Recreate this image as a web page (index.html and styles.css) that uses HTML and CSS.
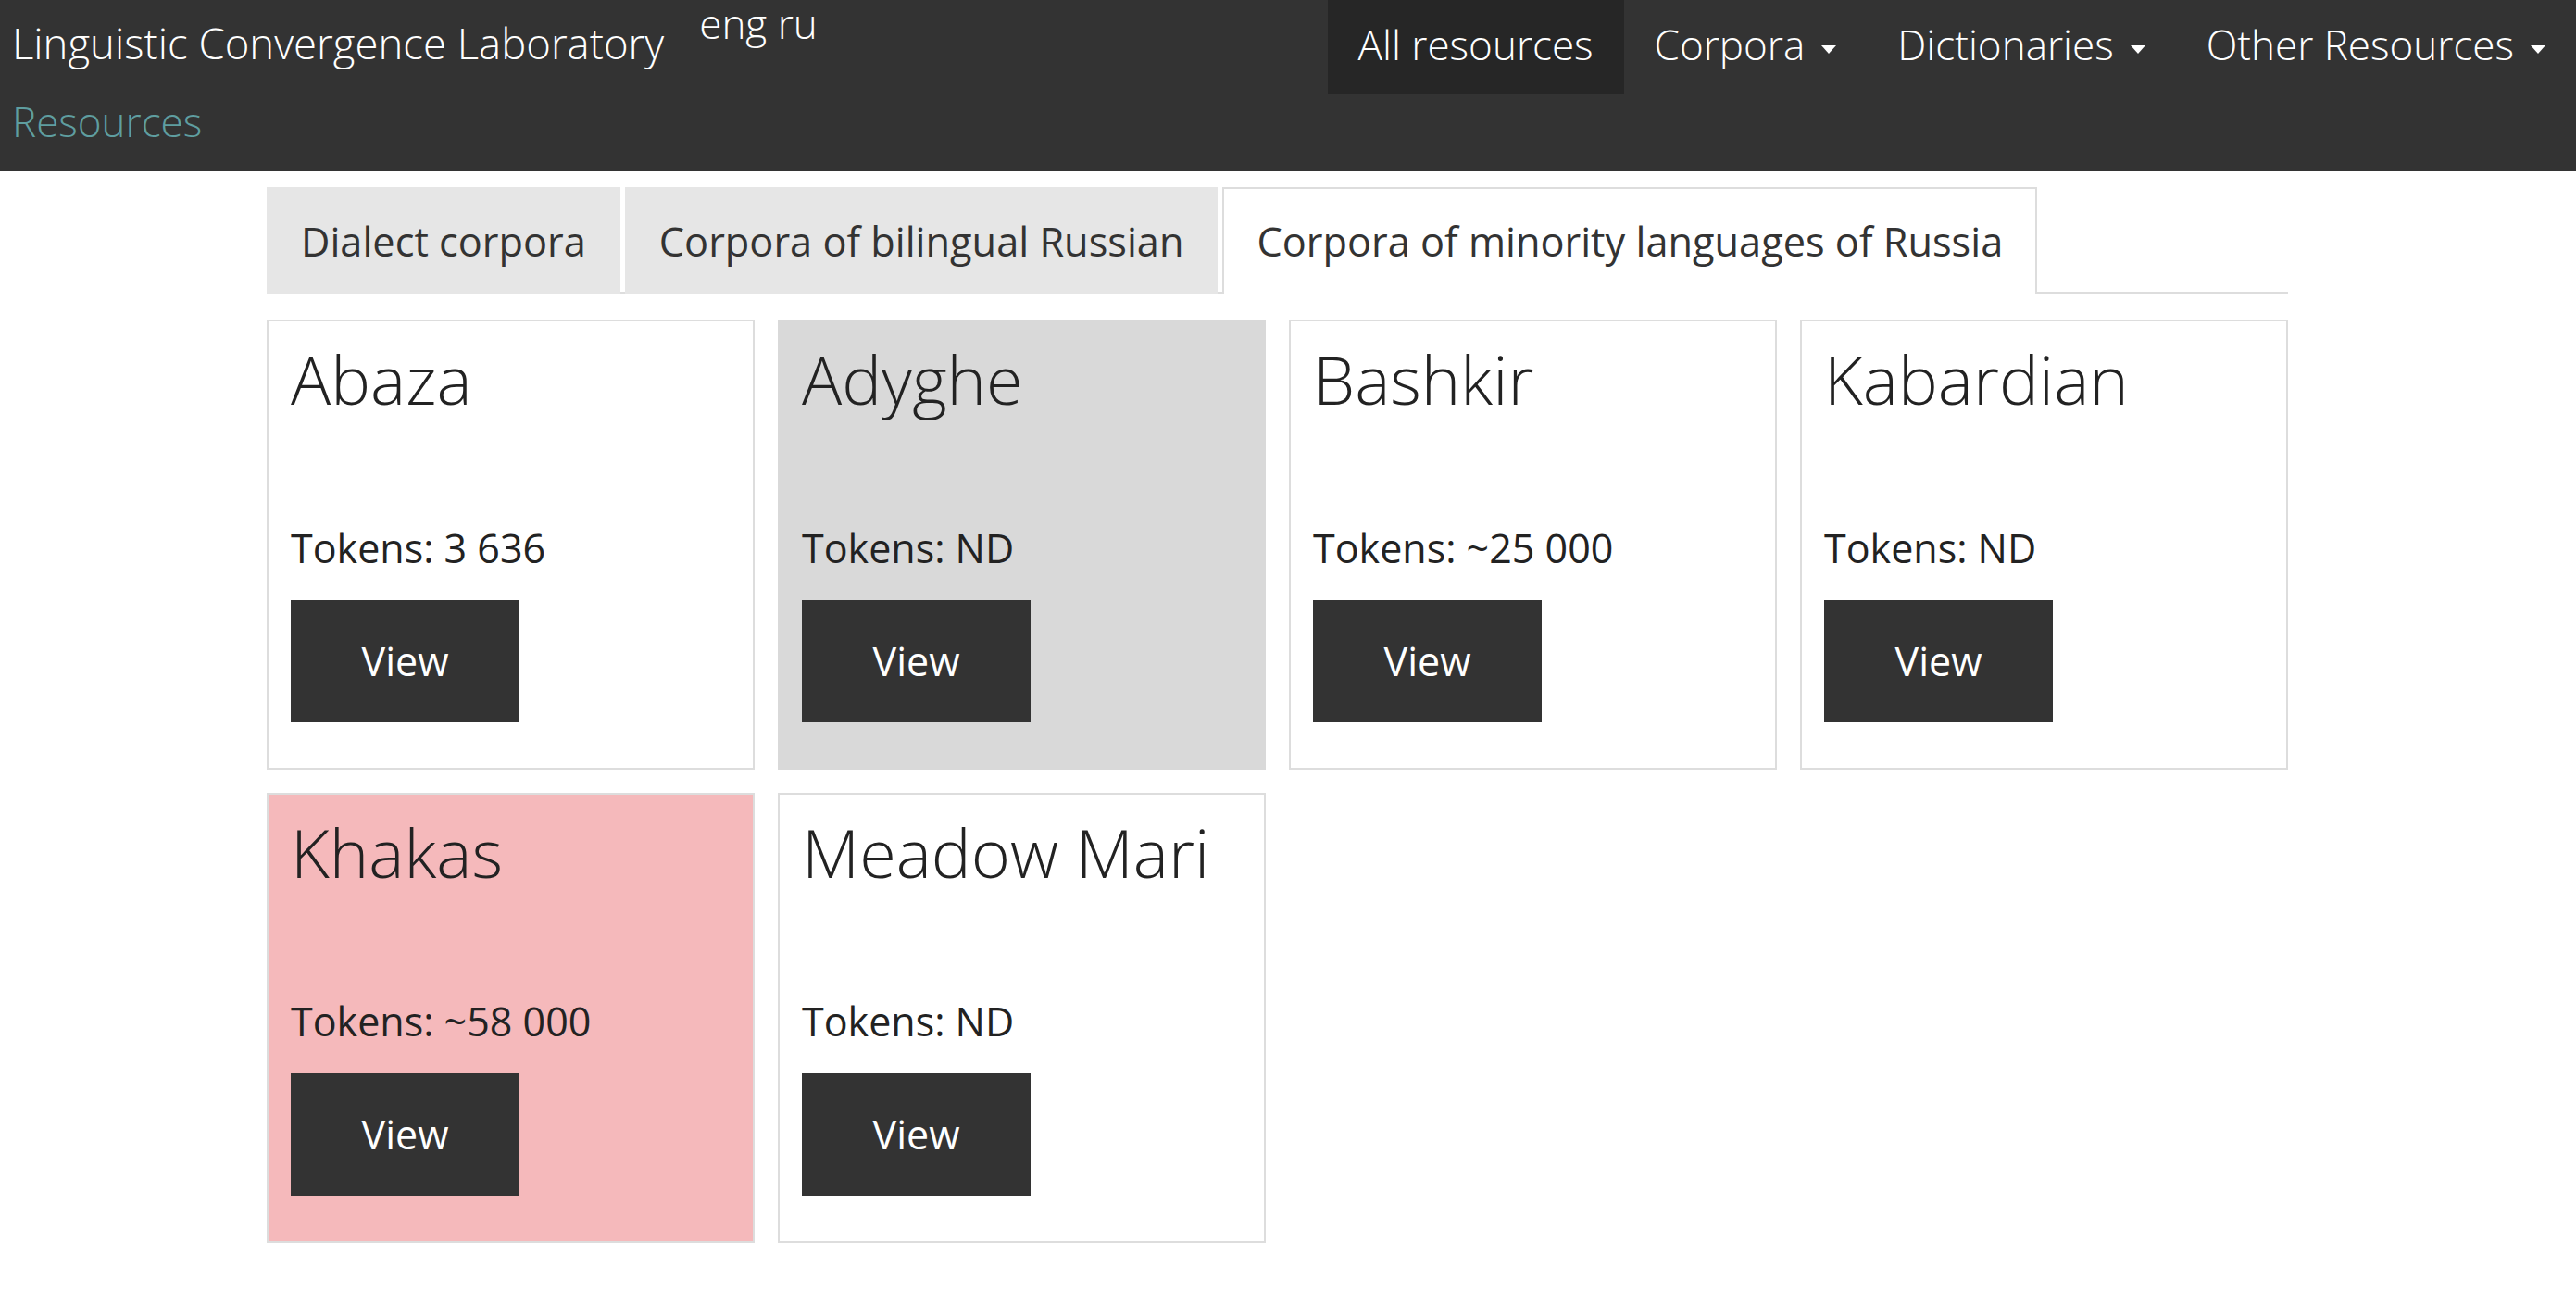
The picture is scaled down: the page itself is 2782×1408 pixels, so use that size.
FILE: index.html
```html
<!DOCTYPE html>
<html lang="en">
<head>
<meta charset="utf-8">
<title>Resources — Linguistic Convergence Laboratory</title>
<link rel="stylesheet" href="styles.css">
</head>
<body>
<header class="navbar">
  <div class="top-row">
    <a class="brand" href="#">Linguistic Convergence Laboratory</a>
    <div class="lang"><a href="#">eng</a> <a href="#">ru</a></div>
    <ul class="nav">
      <li><a class="nav-link active" href="#">All resources</a></li>
      <li><a class="nav-link" href="#">Corpora<span class="caret"></span></a></li>
      <li><a class="nav-link" href="#">Dictionaries<span class="caret"></span></a></li>
      <li><a class="nav-link" href="#">Other Resources<span class="caret"></span></a></li>
    </ul>
  </div>
  <div class="sub-row">Resources</div>
</header>

<main class="container">
  <ul class="tabs">
    <li class="tab">Dialect corpora</li>
    <li class="tab">Corpora of bilingual Russian</li>
    <li class="tab tab-active">Corpora of minority languages of Russia</li>
  </ul>

  <div class="cards">
    <div class="card">
      <h2 class="card-title">Abaza</h2>
      <p class="tokens">Tokens: 3 636</p>
      <a class="btn" href="#">View</a>
    </div>
    <div class="card card-gray">
      <h2 class="card-title">Adyghe</h2>
      <p class="tokens">Tokens: ND</p>
      <a class="btn" href="#">View</a>
    </div>
    <div class="card">
      <h2 class="card-title">Bashkir</h2>
      <p class="tokens">Tokens: ~25 000</p>
      <a class="btn" href="#">View</a>
    </div>
    <div class="card">
      <h2 class="card-title">Kabardian</h2>
      <p class="tokens">Tokens: ND</p>
      <a class="btn" href="#">View</a>
    </div>
    <div class="card card-pink">
      <h2 class="card-title">Khakas</h2>
      <p class="tokens">Tokens: ~58 000</p>
      <a class="btn" href="#">View</a>
    </div>
    <div class="card">
      <h2 class="card-title">Meadow Mari</h2>
      <p class="tokens">Tokens: ND</p>
      <a class="btn" href="#">View</a>
    </div>
  </div>
</main>
</body>
</html>
```

FILE: styles.css
```css
* {
  box-sizing: border-box;
}

html, body {
  margin: 0;
  padding: 0;
  background: #fff;
}

body {
  font-family: "Open Sans", "Liberation Sans", sans-serif;
  color: #222;
}

a {
  text-decoration: none;
}

/* ---------- Header ---------- */
.navbar {
  background: #333333;
  color: #fff;
}

.top-row {
  display: flex;
  align-items: flex-start;
  height: 102px;
}

.brand {
  color: #fff;
  font-size: 45.5px;
  font-weight: 300;
  line-height: 92px;
  padding-left: 13px;
  white-space: nowrap;
}

.lang {
  margin-left: 38px;
  font-size: 44px;
  font-weight: 300;
  line-height: 50px;
  white-space: nowrap;
}

.lang a {
  color: #fff;
}

.nav {
  display: flex;
  list-style: none;
  margin: 0 0 0 auto;
  padding: 0;
}

.nav-link {
  display: block;
  color: #fff;
  font-size: 44px;
  font-weight: 300;
  line-height: 96px;
  padding: 0 33px 6px;
  white-space: nowrap;
}

.nav-link.active {
  background: #262626;
}

.caret {
  display: inline-block;
  width: 0;
  height: 0;
  margin-left: 18px;
  border-top: 9px solid #fff;
  border-left: 8px solid transparent;
  border-right: 8px solid transparent;
  vertical-align: middle;
}

.sub-row {
  color: #5f9ea0;
  font-size: 44px;
  font-weight: 300;
  line-height: 58px;
  padding: 0 0 25px 13px;
}

/* ---------- Content ---------- */
.container {
  width: 2183px;
  margin: 17px 0 0 288px;
}

.tabs {
  display: flex;
  list-style: none;
  margin: 0;
  padding: 0;
  border-bottom: 2px solid #dddddd;
}

.tab {
  font-size: 43.3px;
  color: #333;
  line-height: 109px;
  padding: 2px 35px 0;
  margin-right: 5px;
  margin-bottom: -2px;
  background: #e6e6e6;
  border: 2px solid transparent;
  border-bottom: 0;
  white-space: nowrap;
}

.tab-active {
  background: #fff;
  border-color: #dddddd;
  padding-bottom: 2px;
}

.cards {
  display: grid;
  grid-template-columns: repeat(4, 527px);
  column-gap: 25px;
  row-gap: 25px;
  margin-top: 28px;
}

.card {
  border: 2px solid #dddddd;
  background: #fff;
  padding: 22px 24px 49px;
}

.card-gray {
  background: #d9d9d9;
  border-color: #d9d9d9;
}

.card-pink {
  background: #f5b9bb;
}

.card-title {
  margin: 0;
  font-size: 72px;
  font-weight: 300;
  line-height: 81px;
  color: #222;
}

.tokens {
  margin: 112px 0 0;
  font-size: 43px;
  line-height: 60px;
  color: #222;
}

.btn {
  display: block;
  width: 247px;
  margin-top: 26px;
  padding: 36px 0;
  background: #333333;
  color: #fff;
  font-size: 43px;
  line-height: 60px;
  text-align: center;
}
```
